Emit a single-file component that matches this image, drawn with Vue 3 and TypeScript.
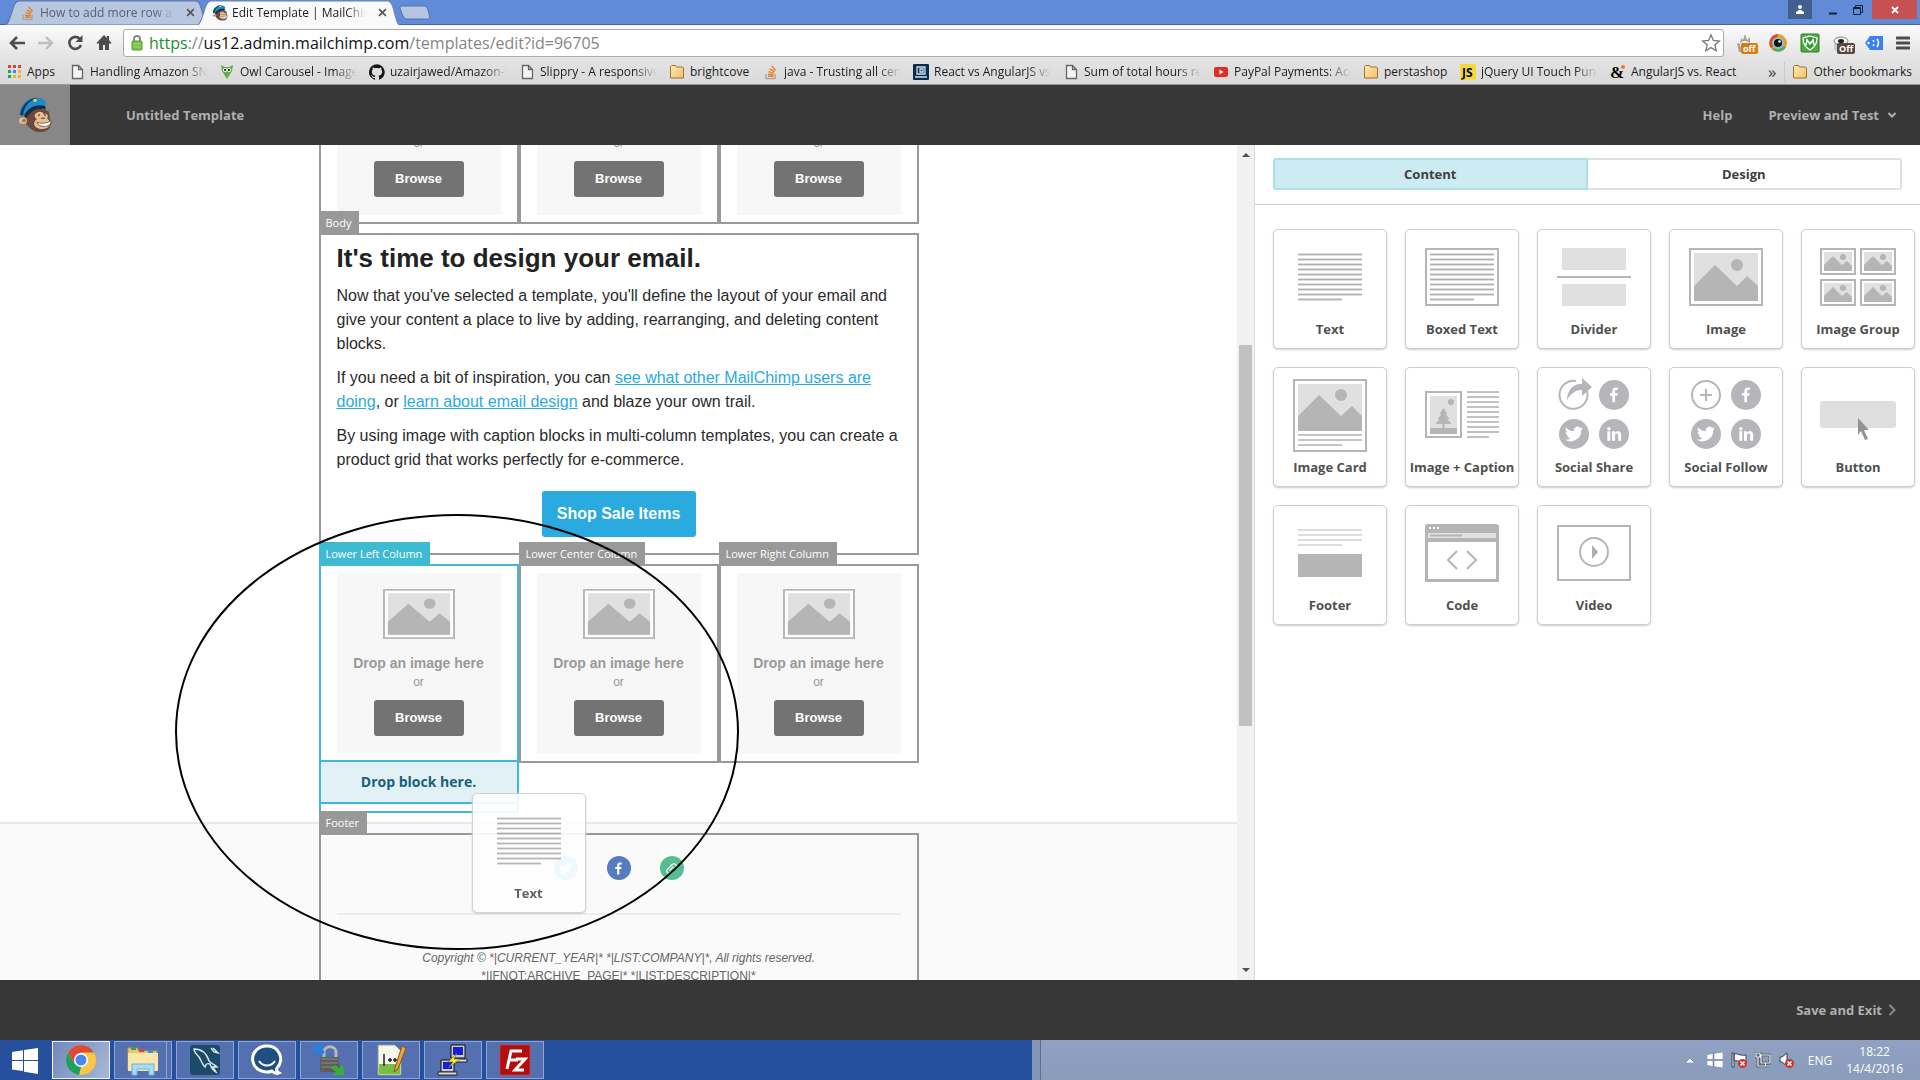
<script setup lang="ts">
interface Bookmark { icon: string; label: string; cut?: boolean; width: number }

const bookmarks: Bookmark[] = [
  { icon: 'apps', label: 'Apps', width: 30 },
  { icon: 'page', label: 'Handling Amazon SNS', cut: true, width: 117 },
  { icon: 'owl', label: 'Owl Carousel - Image slider', cut: true, width: 117 },
  { icon: 'github', label: 'uzairjawed/Amazon-SES', cut: true, width: 117 },
  { icon: 'page', label: 'Slippry - A responsive', cut: true, width: 117 },
  { icon: 'folder', label: 'brightcove', width: 61 },
  { icon: 'stack', label: 'java - Trusting all certificates', cut: true, width: 117 },
  { icon: 'react', label: 'React vs AngularJS vs', cut: true, width: 117 },
  { icon: 'page', label: 'Sum of total hours report', cut: true, width: 117 },
  { icon: 'youtube', label: 'PayPal Payments: Accept', cut: true, width: 117 },
  { icon: 'folder', label: 'perstashop', width: 64 },
  { icon: 'js', label: 'jQuery UI Touch Punch', cut: true, width: 117 },
  { icon: 'amp', label: 'AngularJS vs. React', width: 112 },
]

const columns = ['Lower Left Column', 'Lower Center Column', 'Lower Right Column']

const blocks: string[] = [
  'Text', 'Boxed Text', 'Divider', 'Image', 'Image Group',
  'Image Card', 'Image + Caption', 'Social Share', 'Social Follow', 'Button',
  'Footer', 'Code', 'Video',
]

const tasks = ['chrome', 'explorer', 'mysql', 'hipchat', 'winscp', 'notepad', 'putty', 'filezilla']
const tenLines = [0, 1, 2, 3, 4, 5, 6, 7, 8, 9]
</script>

<template>
  <div class="screen">
    <svg class="defs" aria-hidden="true">
      <defs>
        <linearGradient id="folderFill" x1="0" y1="0" x2="1" y2="1"><stop offset="0" stop-color="#fdeab8" /><stop offset="1" stop-color="#f4c065" /></linearGradient>
        <symbol id="photo" viewBox="0 0 74 58" preserveAspectRatio="none">
          <rect x="1" y="1" width="72" height="56" fill="#fff" stroke="#b6b6b6" stroke-width="2" />
          <rect x="5" y="5" width="64" height="48" fill="#e0e0e0" />
          <path d="M5 38 26 17 48 38 58 28 69 38V53H5Z" fill="#b5b5b5" />
          <circle cx="48" cy="17" r="6" fill="#b5b5b5" />
        </symbol>
        <symbol id="monkey" viewBox="0 0 34 44" preserveAspectRatio="none">
          <path d="M7 20C5 28 8 35 13 39c5 5 13 5 17 1 3-3 3-7 2-10l-1-12-10-6Z" fill="#6b4840" />
          <path d="M2 21C2 10 9 2 17 1c6-1 10 2 11 6l-1 5C18 9 12 13 7 23Z" fill="#1d8ccc" />
          <path d="M2 22C3 11 10 2 19 1l-3 2C9 7 6 13 5 23Z" fill="#153a56" />
          <path d="M6 23C10 13 18 8 27 11l1 4C19 13 13 17 9 25Z" fill="#172c3f" />
          <circle cx="17" cy="4" r="2" fill="#f0c05a" />
          <circle cx="5" cy="29" r="4" fill="#e6b98d" /><circle cx="6" cy="29" r="2" fill="#a8745a" />
          <path d="M17 21c3-4 7-4 9 0 3-2 5 2 3 5 4 4 4 9 0 12-6 3-12 0-13-5 0-3 2-5 3-6-2-1-3-4-2-6Z" fill="#e7bd91" />
          <path d="M19 31c5 2 10 1 14-2 0 5-3 7-7 7s-6-2-7-5Z" fill="#fff" stroke="#5a3a32" stroke-width=".8" />
          <circle cx="21" cy="22" r="1" fill="#3c2722" /><circle cx="27" cy="22" r="1" fill="#3c2722" /><path d="M23 26h4" stroke="#6b4840" stroke-width="1.4" />
        </symbol>
        <symbol id="bird" viewBox="0 0 24 24"><path fill="currentColor" d="M23.9 4.6a10 10 0 0 1-2.8.8 5 5 0 0 0 2.1-2.7 10 10 0 0 1-3.1 1.2 4.9 4.9 0 0 0-8.4 4.5A14 14 0 0 1 1.6 3.2a4.9 4.9 0 0 0 1.5 6.5 4.9 4.9 0 0 1-2.2-.6 4.9 4.9 0 0 0 4 4.9 5 5 0 0 1-2.3.1 4.9 4.9 0 0 0 4.6 3.4A9.9 9.9 0 0 1 0 19.5 14 14 0 0 0 21.5 7.1a10 10 0 0 0 2.4-2.5Z" /></symbol>
        <symbol id="fbook" viewBox="0 0 24 24"><path fill="currentColor" d="M9.5 23V13H6V9h3.500V6c0-3.500 2-5.300 5.200-5.300 1.500 0 2.800.1 3.200.2v3.600h-2.200c-1.700 0-2.100.8-2.100 2V9h4l-.5 4h-3.500v10Z" /></symbol>
        <symbol id="linked" viewBox="0 0 24 24"><path fill="currentColor" d="M2 8h4.500v14H2ZM4.250 1.500a2.600 2.600 0 1 1 0 5.200 2.600 2.600 0 0 1 0-5.200ZM9 8h4.300v2c.8-1.400 2.300-2.300 4.300-2.300 4.300 0 5.200 2.800 5.200 6.500V22h-4.500v-7c0-1.700 0-3.600-2.300-3.600S13.500 13 13.500 15v7H9Z" /></symbol>
        <symbol id="so" viewBox="0 0 16 16"><path d="M3 10v4.500h9V10" fill="none" stroke="#a8a8a8" stroke-width="1.500" /><path d="M5 12.300h5.500M5 10.200l5.500.5M5.500 7.700l5.300 1.600M6.800 4.800l4.700 3M9 2l3.500 4.500" stroke="#ef8025" stroke-width="1.400" fill="none" /></symbol>
        <symbol id="alert" viewBox="0 0 9 9"><circle cx="4.500" cy="4.500" r="4.500" fill="#d9302c" /><path d="m2.500 2.500 4 4m0-4-4 4" stroke="#fff" stroke-width="1.500" /></symbol>
      </defs>
    </svg>

    <header class="browser">
      <div class="tabstrip">
        <div class="tab idle">
          <svg class="tab-shape" viewBox="0 0 200 24" preserveAspectRatio="none"><path d="M0 24C3 23 4 20 6 14S9 1 14 1H187c4 0 5 6 7 13s3 10 6 10Z" fill="#b8c7e0" stroke="#5a76ad" /></svg>
          <svg class="ico"><use href="#so" /></svg>
          <span class="tab-title">How to add more row at the</span>
          <button class="tab-close" aria-label="Close tab"><svg viewBox="0 0 8 8"><path d="m1 1 6 6m0-6-6 6" /></svg></button>
        </div>
        <div class="tab live">
          <svg class="tab-shape" viewBox="0 0 200 24" preserveAspectRatio="none"><path d="M0 25C3 23 4 20 6 14S9 1 14 1H187c4 0 5 6 7 13s3 10 6 11Z" fill="#f9f9f9" stroke="#6b83b5" /></svg>
          <svg class="ico"><use href="#monkey" /></svg>
          <span class="tab-title">Edit Template | MailChimp</span>
          <button class="tab-close" aria-label="Close tab"><svg viewBox="0 0 8 8"><path d="m1 1 6 6m0-6-6 6" /></svg></button>
        </div>
        <button class="newtab" aria-label="New tab"><svg viewBox="0 0 32 16"><path d="M3 1h22c3 0 4 2 6 13H9C5 14 4 12 1 3c0-1 0-2 2-2Z" fill="#b5c4e2" stroke="#5672a8" /></svg></button>
        <div class="spacer"></div>
        <button class="user" aria-label="Profile"><svg viewBox="0 0 12 12"><circle cx="6" cy="3" r="2" fill="#fff" /><path d="M2 10V8l3-2h2l3 2v2Z" fill="#fff" /></svg></button>
        <button class="winbtn" aria-label="Minimize"><svg viewBox="0 0 12 12"><path d="M2 9.500h8" stroke="#16203a" stroke-width="2" /></svg></button>
        <button class="winbtn" aria-label="Restore"><svg viewBox="0 0 12 12"><path d="M1.500 3.500h7v7h-7ZM1.500 4.500h7M3.500 3V1.500h7v7H9" fill="none" stroke="#16203a" /></svg></button>
        <button class="winbtn close" aria-label="Close"><svg viewBox="0 0 12 12"><path d="m3 3 6 6m0-6-6 6" stroke="#fff" stroke-width="1.800" /></svg></button>
      </div>

      <div class="toolbar">
        <button class="nav" aria-label="Back"><svg viewBox="0 0 18 18"><path d="M17 9H3m6-6L3 9l6 6" fill="none" stroke="#4d4d4d" stroke-width="2.600" /></svg></button>
        <button class="nav" aria-label="Forward"><svg viewBox="0 0 18 18"><path d="M1 9h14M9 3l6 6-6 6" fill="none" stroke="#bdbdbd" stroke-width="2.400" /></svg></button>
        <button class="nav" aria-label="Reload"><svg viewBox="0 0 18 18"><path d="M14 5A6 6 0 1 0 15 11" fill="none" stroke="#4d4d4d" stroke-width="2.600" /><path d="M16.500 1v7h-7Z" fill="#4d4d4d" /></svg></button>
        <button class="nav" aria-label="Home"><svg viewBox="0 0 18 18"><path d="M9 1 1.500 9l1.300 1L4 9v7h4v-5h2v5h4V9l1.200 1 1.300-1L14 6V2h-2v2Z" fill="#4d4d4d" /></svg></button>
        <div class="omnibox">
          <svg class="lock" viewBox="0 0 12 16"><path d="M3 8V4a3 3 0 0 1 6 0v4" fill="none" stroke="#8a8a8a" stroke-width="2" /><rect x="1" y="6" width="10" height="9" rx="1" fill="#76c043" stroke="#559c31" /><path d="M2 9h8M2 12h8" stroke="#a6dc7b" /></svg>
          <a class="url" href="#"><span class="scheme">https</span><span class="dim">://</span>us12.admin.mailchimp.com<span class="dim">/templates/edit?id=96705</span></a>
          <svg class="star" viewBox="0 0 20 20"><path d="m10 2 2.400 5.500 5.900.5-4.500 3.900 1.400 5.800L10 14.600l-5.200 3.100 1.400-5.800L1.700 8l5.900-.5Z" fill="#fff" stroke="#777" stroke-width="1.300" /></svg>
        </div>
        <div class="extensions">
          <span class="ext"><svg viewBox="0 0 20 20"><path d="M3 19 1 10l3 1 1-6 2 2 2-6 2 6 3-3v7l3-1-2 9Z" fill="#a3a3a3" /><ellipse cx="9" cy="12" rx="5" ry="4" fill="#f4f4f4" /><circle cx="7" cy="11" r="1" /><circle cx="11" cy="11" r="1" /></svg><b class="off orange">off</b></span>
          <span class="ext"><svg viewBox="0 0 20 20"><circle cx="10" cy="10" r="9" fill="#ef9b28" /><path d="M10 1a9 9 0 0 0-7 14l4-3Z" fill="#df4932" /><path d="M4 16a9 9 0 0 0 14-2l-5-1Z" fill="#55ab63" /><circle cx="10" cy="10" r="6" fill="#7cc8d8" /><circle cx="10" cy="10" r="4" fill="#111" /><circle cx="11.500" cy="8.500" r="1.300" fill="#fff" /></svg></span>
          <span class="ext"><svg viewBox="0 0 20 20"><rect x="1" y="1" width="18" height="18" rx="1" fill="#4eaa3b" stroke="#2b8124" /><path d="m10 3 7 2c0 6-2 9-7 12-5-3-7-6-7-12Z" fill="#389b35" stroke="#fff" stroke-width="1.300" /><path d="m6 12 1-5 3 4 3-4 1 5" fill="none" stroke="#fff" stroke-width="1.600" /></svg></span>
          <span class="ext"><svg viewBox="0 0 20 20"><path d="M2 8v8c0 3 14 3 14 0V8Z" fill="#ccc" /><ellipse cx="9" cy="8" rx="7" ry="4" fill="#efefef" stroke="#888" /><ellipse cx="9" cy="8" rx="3" ry="2" fill="#222" /></svg><b class="off">Off</b></span>
          <span class="ext"><svg viewBox="0 0 20 20"><path d="m1 10 5-7h13v14H6Z" fill="#3c82ee" /><circle cx="4.500" cy="10" r="1.200" fill="#fff" /><path d="M9.500 7v2M9.500 11v2M13 6q3 4 0 8" stroke="#fff" stroke-width="1.500" fill="none" /></svg></span>
          <button class="menu" aria-label="Menu"><svg viewBox="0 0 14 14"><path d="M1 2h12M1 7h12M1 12h12" stroke="#4d4d4d" stroke-width="3" stroke-linecap="round" /></svg></button>
        </div>
      </div>

      <nav class="bookmarks">
        <a v-for="b in bookmarks" :key="b.label" href="#" class="bm">
          <svg class="ico" viewBox="0 0 16 16">
            <template v-if="b.icon === 'apps'">
              <path d="M2 1h3v3H2zM7 1h3v3H7zM12 1h3v3h-3z" fill="#e8402f" /><path d="M2 6h3v3H2z" fill="#1da462" /><path d="M7 6h3v3H7z" fill="#3e82f1" /><path d="M12 6h3v3h-3z" fill="#f3b31c" /><path d="M2 11h3v3H2z" fill="#1da462" /><path d="M7 11h3v3H7zM12 11h3v3h-3z" fill="#f3b31c" />
            </template>
            <path v-else-if="b.icon === 'page'" d="M3.500 1.500h6l4 4v9h-10ZM9.500 1.500v4h4" fill="#f4f4f4" stroke="#666" stroke-width="1.300" />
            <path v-else-if="b.icon === 'folder'" d="M1.500 4V2.500l1-1h4l1 1.500h6l1 1v10h-13Z" fill="url(#folderFill)" stroke="#9c7136" />
            <template v-else-if="b.icon === 'owl'"><path d="M2 1l4 2h4l4-2-1 6-5 8-5-8Z" fill="#5bb540" /><circle cx="6" cy="6" r="2" fill="#fff" /><circle cx="10" cy="6" r="2" fill="#fff" /><circle cx="6" cy="6" r="1" /><circle cx="10" cy="6" r="1" /></template>
            <path v-else-if="b.icon === 'github'" fill="#181717" d="M8 .2a8 8 0 0 0-2.500 15.600c.4 0 .5-.2.5-.4v-1.500c-2.200.5-2.700-1-2.700-1-.4-1-.9-1.200-.9-1.200-.7-.5.1-.5.1-.5.8 0 1.200.8 1.200.8.700 1.300 1.900.9 2.300.7.100-.5.3-.9.5-1.100C4.700 11.400 2.900 10.700 2.900 7.700c0-.9.300-1.600.8-2.200 0-.2-.4-1 .1-2.100 0 0 .7-.2 2.200.8a7.600 7.600 0 0 1 4 0c1.500-1 2.200-.8 2.200-.8.4 1.100.1 1.900.1 2.100.5.6.8 1.300.8 2.200 0 3-1.900 3.700-3.600 3.900.3.200.5.700.5 1.500v2.200c0 .2.100.5.5.4A8 8 0 0 0 8 .2Z" />
            <use v-else-if="b.icon === 'stack'" href="#so" />
            <template v-else-if="b.icon === 'react'"><rect width="16" height="16" rx="1" fill="#0b2c49" /><path d="M4 3h8v7H4ZM2 13h12M7 5h3v3H7Z" fill="none" stroke="#cfe0ee" stroke-width="1.300" /></template>
            <template v-else-if="b.icon === 'youtube'"><rect x="1" y="3" width="14" height="10" rx="2" fill="#e62b22" /><path d="m6.500 5.500 4 2.500-4 2.500Z" fill="#fff" /></template>
            <template v-else-if="b.icon === 'js'"><rect width="16" height="16" fill="#f5d93b" /><text x="2" y="13" class="js">JS</text></template>
            <template v-else><text x="0" y="14" class="ampersand">&amp;</text><circle cx="13" cy="3" r="2" fill="#ee7a22" /></template>
          </svg>
          <span :class="{ cut: b.cut }" :style="{ width: b.width + 'px' }">{{ b.label }}</span>
        </a>
        <span class="more">»</span>
        <a href="#" class="bm other"><svg class="ico" viewBox="0 0 16 16"><path d="M1.500 4V2.500l1-1h4l1 1.500h6l1 1v10h-13Z" fill="url(#folderFill)" stroke="#9c7136" /></svg><span>Other bookmarks</span></a>
      </nav>
    </header>

    <div class="appbar">
      <a class="brand" href="#" aria-label="Home"><svg><use href="#monkey" /></svg></a>
      <span class="name">Untitled Template</span>
      <a class="applink" href="#">Help</a>
      <button class="applink preview">Preview and Test<svg viewBox="0 0 10 10"><path d="m1.500 3 3.500 3.500L8.500 3" fill="none" stroke="#b0b0b0" stroke-width="2" /></svg></button>
    </div>

    <main class="work">
      <div class="canvas">
        <div class="email-main">
          <div class="email">
            <div class="row clipped">
              <div v-for="c in columns" :key="c" class="col">
                <div class="drop">
                  <svg class="pic"><use href="#photo" /></svg>
                  <strong>Drop an image here</strong><span>or</span>
                  <button class="browse">Browse</button>
                </div>
              </div>
            </div>
            <section class="body-box">
              <span class="label">Body</span>
              <h1>It's time to design your email.</h1>
              <p>Now that you've selected a template, you'll define the layout of your email and give your content a place to live by adding, rearranging, and deleting content blocks.</p>
              <p>If you need a bit of inspiration, you can <a href="#">see what other MailChimp users are doing</a>, or <a href="#">learn about email design</a> and blaze your own trail.</p>
              <p>By using image with caption blocks in multi-column templates, you can create a product grid that works perfectly for e-commerce.</p>
              <button class="shop">Shop Sale Items</button>
            </section>
            <div class="row">
              <div v-for="(c, i) in columns" :key="c" class="col" :class="{ active: i === 0 }">
                <span class="label">{{ c }}</span>
                <div class="drop">
                  <svg class="pic"><use href="#photo" /></svg>
                  <strong>Drop an image here</strong><span>or</span>
                  <button class="browse">Browse</button>
                </div>
                <div v-if="i === 0" class="target">Drop block here.</div>
              </div>
            </div>

            <div class="dragged card">
              <svg viewBox="1 1 112 84"><g v-for="n in tenLines" :key="n"><rect x="25" :y="24 + n * 5" :width="n === 9 ? 44 : 64" height="3" fill="#dedede" /><rect x="25" :y="25 + n * 5" :width="n === 9 ? 44 : 64" height="1" fill="#b0b0b0" /></g></svg>
              <span>Text</span>
            </div>
            <svg class="ring" viewBox="0 0 568 438"><ellipse cx="283" cy="219" rx="281" ry="217" fill="none" stroke="#000" stroke-width="2" /></svg>
          </div>
        </div>
        <div class="email-foot">
          <div class="email foot-box">
            <span class="label">Footer</span>
            <div class="socials">
              <a href="#" aria-label="Twitter" class="tw"><svg><use href="#bird" /></svg></a>
              <a href="#" aria-label="Facebook" class="fb"><svg><use href="#fbook" /></svg></a>
              <a href="#" aria-label="Website" class="web"><svg viewBox="0 0 24 24"><path d="m9 15 6-6M10 8l4-4c4-3 9 2 6 6l-4 4M14 16l-4 4c-4 3-9-2-6-6l4-4" fill="none" stroke="#fff" stroke-width="2.500" stroke-linecap="round" /></svg></a>
            </div>
            <hr />
            <div class="legal"><em>Copyright © *|CURRENT_YEAR|* *|LIST:COMPANY|*, All rights reserved.</em><br />*|IFNOT:ARCHIVE_PAGE|* *|LIST:DESCRIPTION|*</div>
          </div>
        </div>
      </div>
      <div class="scrollbar">
        <svg viewBox="0 0 8 5"><path d="m0 5 4-4 4 4Z" /></svg>
        <div class="track"><div class="thumb"></div></div>
        <svg viewBox="0 0 8 5"><path d="m0 0 4 4 4-4Z" /></svg>
      </div>

      <aside class="panel">
        <div class="tabs"><button class="on">Content</button><button>Design</button></div>
        <div class="cards">
          <div v-for="name in blocks" :key="name" class="card">
            <svg viewBox="1 1 112 84">
              <template v-if="name === 'Text' || name === 'Boxed Text'">
                <rect v-if="name === 'Boxed Text'" x="21" y="20" width="72" height="56" fill="none" stroke="#b6b6b6" stroke-width="2" />
                <g v-for="n in tenLines" :key="n"><rect x="25" :y="24 + n * 5" :width="n === 9 ? 44 : 64" height="3" fill="#dedede" /><rect x="25" :y="25 + n * 5" :width="n === 9 ? 44 : 64" height="1" fill="#b0b0b0" /></g>
              </template>
              <template v-else-if="name === 'Divider'"><path d="M25 19h64v22H25ZM25 55h64v22H25Z" fill="#e0e0e0" /><path d="M20 48h74" stroke="#b6b6b6" stroke-width="2" /></template>
              <use v-else-if="name === 'Image'" href="#photo" x="20" y="19" width="74" height="58" />
              <template v-else-if="name === 'Image Group'">
                <g v-for="p in [[19, 19], [59, 19], [19, 50], [59, 50]]" :key="p.join()" :transform="`translate(${p[0]} ${p[1]})`">
                  <rect x="1" y="1" width="34" height="25" fill="#fff" stroke="#b6b6b6" stroke-width="2" /><rect x="4" y="4" width="28" height="19" fill="#e0e0e0" /><path d="M4 17 13 8l9 9 5-4 5 5v5H4Z" fill="#b5b5b5" /><circle cx="23" cy="9" r="3" fill="#b5b5b5" />
                </g>
              </template>
              <template v-else-if="name === 'Image Card'">
                <rect x="21" y="13" width="72" height="71" fill="none" stroke="#b6b6b6" stroke-width="2" /><rect x="25" y="17" width="64" height="47" fill="#e0e0e0" /><path d="M25 49 46 28 68 49 79 39 89 49V64H25Z" fill="#b5b5b5" /><circle cx="68" cy="28" r="6" fill="#b5b5b5" /><path d="M25 68h64M25 73h64M25 78h44" stroke="#c4c4c4" stroke-width="2" />
              </template>
              <template v-else-if="name === 'Image + Caption'">
                <rect x="21" y="25" width="35" height="45" fill="none" stroke="#b6b6b6" stroke-width="2" /><rect x="25" y="29" width="27" height="32" fill="#e0e0e0" /><path d="M25 61h27v6H25ZM37.500 56h2v5h-2ZM38.500 41l4 6h-2l4 5h-2l4 5h-16l4-5h-2l4-5h-2Z" fill="#b5b5b5" /><circle cx="46" cy="35" r="3" fill="#b5b5b5" />
                <rect v-for="n in tenLines" :key="n" x="62" :y="24 + n * 5" :width="n === 9 ? 22 : 32" height="2" fill="#c2c2c2" />
              </template>
              <g v-else-if="name === 'Social Share' || name === 'Social Follow'" color="#fff">
                <template v-if="name === 'Social Share'"><path d="M39 14A14 14 0 1 0 50 24" fill="none" stroke="#b5b5ba" stroke-width="2" /><path d="M30 33c0-10 7-17 15-16v-6l10 9-10 9v-6c-6 0-11 3-15 10Z" fill="#b5b5ba" /></template>
                <template v-else><circle cx="37" cy="28" r="14" fill="none" stroke="#b5b5ba" stroke-width="2" /><path d="M31 28h12M37 22v12" stroke="#b5b5ba" stroke-width="2" /></template>
                <circle cx="77" cy="28" r="15" fill="#b5b5ba" /><circle cx="37" cy="67" r="15" fill="#b5b5ba" /><circle cx="77" cy="67" r="15" fill="#b5b5ba" />
                <use href="#fbook" x="69" y="20" width="16" height="16" /><use href="#bird" x="28" y="58" width="18" height="18" /><use href="#linked" x="69" y="59" width="16" height="16" />
              </g>
              <template v-else-if="name === 'Button'"><rect x="19" y="34" width="76" height="27" rx="3" fill="#dedede" /><path d="M57 51v17l3-4 4 9 3-1-4-9h5Z" fill="#929292" /></template>
              <template v-else-if="name === 'Footer'"><path d="M25 25h64M25 30h64M25 35h64M25 40h44" stroke="#dedede" stroke-width="2" /><rect x="25" y="49" width="64" height="23" fill="#b5b5b5" /></template>
              <template v-else-if="name === 'Code'">
                <path d="M20 22q0-3 3-3h68q3 0 3 3v55H20Z" fill="#b5b5b5" /><rect x="23" y="28" width="68" height="5" fill="#e0e0e0" /><path d="M25 30.500h32" stroke="#b5b5b5" stroke-width="2" /><path d="M24 22h2v2h-2ZM28 22h2v2h-2ZM32 22h2v2h-2ZM23 37h68v37H23Z" fill="#fff" /><path d="m52 46-9 9 9 9M62 46l9 9-9 9" fill="none" stroke="#b5b5b5" stroke-width="2" />
              </template>
              <template v-else><rect x="21" y="21" width="72" height="54" fill="none" stroke="#b6b6b6" stroke-width="2" /><circle cx="57" cy="47" r="14" fill="none" stroke="#b6b6b6" stroke-width="2" /><path d="m55 40 6 7-6 7Z" fill="#b0b0b0" /></template>
            </svg>
            <span>{{ name }}</span>
          </div>
        </div>
      </aside>
    </main>

    <footer class="savebar"><button>Save and Exit<svg viewBox="0 0 8 12"><path d="m1.500 1 5 5-5 5" fill="none" stroke="#8a8a8a" stroke-width="2" /></svg></button></footer>

    <div class="taskbar">
      <div class="tasks">
        <button class="start" aria-label="Start"><svg viewBox="0 0 26 26"><path d="M0 4 11 2.300V12H0ZM12 2.100 26 0v12H12ZM0 13h11v10L0 21.500ZM12 13h14v13l-14-2.300Z" fill="#fff" /></svg></button>
        <button v-for="t in tasks" :key="t" class="task" :class="t" :aria-label="t">
          <svg viewBox="0 0 32 32">
            <template v-if="t === 'chrome'"><circle cx="16" cy="16" r="15" fill="#f7c846" /><path d="M3 8.500A15 15 0 0 1 29 8.500H16l-6.500 11Z" fill="#dc4a3d" /><path d="M3 8.500 9.500 19.500 16 23l-2 8A15 15 0 0 1 3 8.500Z" fill="#1fa05f" /><circle cx="16" cy="16" r="7" fill="#fff" /><circle cx="16" cy="16" r="5.500" fill="#4688f1" /></template>
            <template v-else-if="t === 'explorer'"><path d="M1 4h9l2 3h18v19H1Z" fill="#e8c878" stroke="#c59a45" /><path d="M4 3h5v3H4Z" fill="#3aa63a" /><path d="M12 5h5v3h-5Z" fill="#d44" /><path d="M21 6h5v3h-5Z" fill="#3a8fd6" /><path d="M1 9h30v18H1Z" fill="#fae6a8" /><path d="M5 31V20h22v11h-5v-6H10v6Z" fill="#a6dcf4" stroke="#6eb4d8" /></template>
            <template v-else-if="t === 'mysql'"><rect x="1" y="1" width="30" height="30" rx="3" fill="#1d4a69" /><path d="M5 5c8 0 13 5 15 12 3 3 6 4 8 6l-4 0 3 5c-4-2-5-5-6-8-3-1-4 0-5 3-3-3-4-7-6-10C8 11 5 8 5 5ZM22 4l3 4 4 1-5-5" fill="none" stroke="#dbe9f2" stroke-width="1.400" /></template>
            <template v-else-if="t === 'hipchat'"><path d="M16 2a14 13 0 1 0 5 25c2 2 5 3 7 2-2-1-3-3-2-5A13 13 0 0 0 16 2Z" fill="#1f4f80" stroke="#fff" stroke-width="3" /><path d="M8 17c4 6 12 6 16 0" fill="none" stroke="#fff" stroke-width="2" /></template>
            <template v-else-if="t === 'winscp'"><path d="M11 14V8c0-7 12-7 12 0v6" fill="none" stroke="#b9b9b9" stroke-width="3" /><rect x="7" y="13" width="19" height="15" rx="1" fill="#5d5d5d" /><path d="M8 15h17M8 19h17M8 23h17" stroke="#8b8b8b" /><path d="M1 1h10L8 4l4 4-3 3-4-4-3 4Z" fill="#2382ea" /><path d="M31 31H20l3-3-5-4 4-3 4 4 4-5Z" fill="#35b52f" /></template>
            <template v-else-if="t === 'notepad'"><path d="M3 1h17l6 6v24H3Z" fill="#f5f7ec" stroke="#8a9b7c" /><path d="M4 20h21v10H4Z" fill="#77be43" /><path d="M9 10v12M13 16h4m-2-2v4M18 16h4m-2-2v4" stroke="#222" stroke-width="1.500" /><path d="m20 24 7-22 4 2-8 21-4 3Z" fill="#efa43a" stroke="#875421" /></template>
            <template v-else-if="t === 'putty'"><path d="M14 1h14v13H14ZM4 16h13v12H4Z" fill="#ccc" stroke="#111" /><path d="M16 3h10v8H16ZM6 18h9v7H6Z" fill="#1620d8" /><path d="M14 15h16v3H14ZM1 28h19v3H1Z" fill="#ddd" stroke="#222" /><path d="m20 9-9 9 5 0-5 6 12-9h-6Z" fill="#faf020" stroke="#665" stroke-width=".6" /></template>
            <template v-else><rect x="1" y="1" width="30" height="30" fill="#b30d0d" stroke="#d53d3d" stroke-dasharray="2 1" /><path d="M8 25 12 7h11M10 16h9M17 15h9l-10 11h9" fill="none" stroke="#fff" stroke-width="3" /></template>
          </svg>
        </button>
      </div>
      <div class="tray">
        <svg viewBox="0 0 10 6" class="up"><path d="m0 6 5-5 5 5Z" fill="#fff" stroke="#536684" stroke-width=".6" /></svg>
        <svg viewBox="0 0 16 16"><path d="M0 2.500 6 1.500V7.500H0ZM7 1.300 16 0v7.500H7ZM0 8.500h6v6L0 13.500ZM7 8.500h9V16l-9-1.300Z" fill="#fff" stroke="#5b6d8a" stroke-width=".5" /></svg>
        <svg viewBox="0 0 16 16"><path d="M1 1h2v14H1ZM3 2c4-1 5 2 12 1v7C9 11 8 8 3 9Z" fill="#fff" stroke="#333c50" /><use href="#alert" x="7" y="7" width="9" height="9" /></svg>
        <svg viewBox="0 0 16 16"><path d="M6 3h9v8H6ZM7 14h7M10.500 11v3M1 1h4v4H1ZM3 5v9h3" fill="none" stroke="#333c50" stroke-width="2.600" /><path d="M6 3h9v8H6ZM7 14h7M10.500 11v3M1 1h4v4H1ZM3 5v9h3" fill="none" stroke="#fff" stroke-width="1.200" /></svg>
        <svg viewBox="0 0 16 16"><path d="M1 5h2l5-4v13l-5-4H1Z" fill="#fff" stroke="#333c50" /><use href="#alert" x="6" y="7" width="9" height="9" /></svg>
        <span class="lang">ENG</span>
        <span class="clock">18:22<br />14/4/2016</span>
      </div>
    </div>
  </div>
</template>

<style>
body { overflow: hidden; }
</style>

<style scoped>
* { box-sizing: border-box; }
button { border: 0; padding: 0; background: none; font: inherit; color: inherit; cursor: pointer; }
a { color: inherit; text-decoration: none; }
svg { display: block; flex: none; }
.screen { height: 100vh; display: flex; flex-direction: column; overflow: hidden; background: #fff; font-family: "Open Sans", "Noto Sans", sans-serif; }
.defs { position: absolute; width: 0; height: 0; }
.spacer { flex: 1; }
.ico { width: 16px; height: 16px; }

.browser { flex: none; background: linear-gradient(#fcfcfc 24px, #e4e4e4 57px, #d9d9d9); border-bottom: 1px solid #999; color: #1c1c1c; font-size: 12px; }
.tabstrip { display: flex; height: 25px; background: #618bd6; border-bottom: 1px solid #4564a0; padding: 0 3px 0 5px; align-items: flex-start; }
.tab { position: relative; display: flex; align-items: center; height: 25px; width: 204px; padding: 0 11px 0 15px; gap: 4px; font-size: 12px; }
.tab + .tab { margin-left: -12px; }
.live { z-index: 1; }
.idle { color: #555f72; }
.tab-shape { position: absolute; left: 0; top: 0; width: 100%; height: 25px; }
.tab .ico, .tab-title, .tab-close { position: relative; }
.tab-title { flex: 1; margin-right: 4px; overflow: hidden; white-space: nowrap; -webkit-mask-image: linear-gradient(90deg, #000 85%, transparent); mask-image: linear-gradient(90deg, #000 85%, transparent); }
.tab-close { width: 16px; height: 16px; display: grid; place-items: center; }
.tab-close svg { width: 9px; height: 9px; stroke: #555; stroke-width: 1.5; fill: none; }
.newtab { margin: 5px 0 0 -2px; }
.newtab svg { width: 32px; height: 16px; }
.user, .winbtn { height: 19px; width: 25px; display: grid; place-items: center; }
.user { width: 24px; background: #41608f; margin-right: 8px; }
.user svg, .winbtn svg { width: 12px; height: 12px; }
.winbtn.close { width: 45px; margin-left: 2px; background: #c75050; }

.toolbar { display: flex; align-items: center; height: 34px; padding: 3px 10px 2px 8px; }
.nav { width: 29px; }
.nav svg { width: 18px; height: 18px; }
.nav:nth-child(4) { margin-right: -1px; }
.omnibox { flex: 1; display: flex; align-items: center; height: 28px; border: 1px solid #aaa; border-radius: 3px; background: #fff; padding: 0 2px 0 7px; }
.lock { width: 12px; height: 16px; margin-right: 6px; }
.url { flex: 1; font-size: 16px; line-height: 24px; color: #111; }
.scheme { color: #189127; }
.dim { color: #858585; }
.star { width: 20px; height: 20px; }
.extensions { display: flex; align-items: center; gap: 12px; margin-left: 12px; }
.ext { position: relative; }
.ext svg { width: 20px; height: 20px; }
.off { position: absolute; left: 5px; top: 10px; padding: 0 2px; background: #5c443f; color: #fff; font-size: 9px; line-height: 11px; border-radius: 2px; }
.orange { background: #d97d12; }
.menu svg { width: 14px; height: 14px; }

.bookmarks { display: flex; align-items: center; height: 25px; padding: 0 8px 0 6px; }
.bm { display: flex; align-items: center; gap: 5px; margin-right: 12px; white-space: nowrap; }
.bm span { line-height: 16px; overflow: hidden; }
.cut { -webkit-mask-image: linear-gradient(90deg, #000 80%, transparent); mask-image: linear-gradient(90deg, #000 80%, transparent); }
.js { font: bold 12px "Open Sans", sans-serif; }
.ampersand { font: bold 17px "Liberation Serif", serif; }
.more { margin-left: auto; padding-right: 8px; margin-right: 7px; font-size: 17px; line-height: 20px; color: #444; border-right: 1px solid #c4ccd6; }
.bm.other { margin-right: 0; }

.appbar { flex: none; display: flex; align-items: center; height: 60px; padding-right: 23px; background: #373737; color: #b0b0b0; font-size: 13px; font-weight: 700; }
.brand { width: 70px; height: 60px; display: grid; place-items: center; background: #878787; }
.brand svg { width: 34px; height: 36px; }
.name { flex: 1; margin-left: 56px; }
.applink { margin-left: 36px; }
.preview { display: flex; align-items: center; gap: 8px; font-weight: 700; }
.preview svg { width: 10px; height: 10px; }

.work { flex: 1; min-height: 0; display: grid; grid-template-columns: minmax(0, 1fr) 18px 665px; overflow: hidden; }
.canvas { overflow: hidden; display: flex; flex-direction: column; font-family: "Liberation Sans", Arial, sans-serif; color: #2b2b2b; }
.email { position: relative; width: 600px; margin: 0 auto; }
.email-main { flex: none; padding-bottom: 9px; }
.row { display: flex; align-items: flex-start; }
.clipped { height: 79px; align-items: flex-end; overflow: hidden; }
.col { position: relative; flex: 1; border: 2px solid #999; padding: 7px 0; }
.active { border-color: #3fbad3; }
.label { position: absolute; left: -2px; top: -24px; height: 24px; padding: 0 8px 0 7px; background: #999; color: #fff; font: 11px/24px "Open Sans", sans-serif; white-space: nowrap; }
.active .label { background: #3fbad3; }
.drop { margin: 0 16px; padding: 16px 0 18px; background: #f7f7f7; display: flex; flex-direction: column; align-items: center; color: #999; }
.pic { width: 72px; height: 50px; margin-bottom: 15px; }
.drop strong { font-size: 14px; line-height: 18px; white-space: nowrap; }
.drop span { font-size: 12px; line-height: 20px; margin-bottom: 8px; }
.browse { width: 90px; height: 36px; padding-bottom: 2px; border-radius: 3px; background: #737373; color: #fff; font-size: 13px; font-weight: 700; }
.target { margin-top: 6px; height: 44px; border: solid #3fbad3; border-width: 2px 0; background: #e2f1f5; color: #17607b; font: bold 14px/40px "Open Sans", sans-serif; text-align: center; }
.body-box { position: relative; margin: 9px 0; padding: 7px 16px 16px; border: 2px solid #999; }
h1 { margin: 0; font-size: 26px; line-height: 32px; color: #222; }
p { margin: 10px 0 0; font-size: 16px; line-height: 24px; }
p a { color: #2baadf; text-decoration: underline; }
.shop { display: block; margin: 19px auto 0; width: 154px; height: 46px; border-radius: 3px; background: #2baadf; color: #fff; font-size: 16px; font-weight: 700; }

.email-foot { flex: 1 0 auto; padding-top: 9px; background: #fafafa; border-top: 2px solid #e8e8e8; }
.foot-box { border: 2px solid #999; padding: 21px 16px; height: 100%; }
.socials { display: flex; justify-content: center; gap: 29px; }
.socials a { width: 24px; height: 24px; border-radius: 50%; display: grid; place-items: center; color: #fff; }
.socials svg { width: 13px; height: 13px; }
.tw { background: #55c5ef; }
.fb { background: #557cbf; }
.web { background: #55bd92; }
hr { margin: 33px 0 34px; border: 0; border-top: 2px solid #eee; }
.legal { height: 36px; text-align: center; font-size: 12px; line-height: 18px; color: #666; }

.card { display: flex; flex-direction: column; align-items: center; height: 120px; border: 1px solid #cfcfcf; border-radius: 5px; background: #fff; box-shadow: 0 1px 2px #ccc; color: #505050; font: bold 13px/30px "Open Sans", sans-serif; white-space: nowrap; }
.card svg { width: 112px; height: 84px; }
.dragged { position: absolute; z-index: 2; left: 153px; top: 648px; width: 114px; opacity: 0.9; }
.ring { position: absolute; z-index: 3; left: -145px; top: 368px; width: 568px; height: 438px; pointer-events: none; }

.scrollbar { display: flex; flex-direction: column; align-items: center; padding: 7px 0; background: #f1f1f1; border-right: 1px solid #ddd; }
.scrollbar svg { width: 8px; height: 5px; fill: #505050; }
.track { flex: 1; align-self: stretch; padding: 0 2px; }
.thumb { height: 47%; margin-top: 188px; background: #c1c1c1; }
.panel { overflow: hidden; }
.tabs { display: flex; padding: 13px 18px 14px; border-bottom: 1px solid #ccc; }
.tabs button { flex: 1 1 50%; height: 32px; border: 2px solid #e0e0e0; border-left: 0; border-radius: 0 3px 3px 0; color: #404040; font-size: 13px; font-weight: 700; }
.tabs .on { border: 2px solid #acdfeb; border-radius: 3px 0 0 3px; background: #cdebf3; }
.cards { display: grid; grid-template-columns: repeat(auto-fill, 114px); gap: 18px; padding: 24px 5px 24px 18px; }

.savebar { flex: none; display: flex; justify-content: flex-end; height: 60px; padding-right: 24px; background: #373737; color: #b0b0b0; font-size: 13px; font-weight: 700; }
.savebar button { display: flex; align-items: center; gap: 6px; }
.savebar svg { width: 8px; height: 12px; }

.taskbar { flex: none; display: flex; height: 40px; background: #264f9e; }
.tasks { display: flex; flex: none; width: 54%; gap: 4px; padding-top: 1px; margin-right: -5px; }
.start { width: 48px; display: grid; place-items: center; }
.start svg { width: 26px; height: 26px; margin-left: 2px; }
.task { width: 58px; height: 38px; display: grid; place-items: center; border: 1px solid #90a5d2; background: #5470b0; }
.task svg { width: 32px; height: 32px; }
.task.chrome { border-color: #f2f5fb; background: linear-gradient(120deg, #7288bb, #a9b8d8); }
.task.explorer { box-shadow: inset -4px 0 #5470b0, inset -5px 0 #90a5d2; }
.tray { flex: 1; display: flex; align-items: center; justify-content: flex-end; gap: 8px; padding-right: 17px; border-left: 8px solid #8496b8; background: linear-gradient(#90a1c3, #8a9cba); box-shadow: inset 1px 0 #5c6f94; color: #fff; font-size: 12px; }
.tray svg { width: 16px; height: 16px; }
.tray .up { width: 10px; height: 6px; margin-right: 4px; }
.lang { margin: 0 6px 0 5px; }
.clock { text-align: center; line-height: 17px; }
</style>
